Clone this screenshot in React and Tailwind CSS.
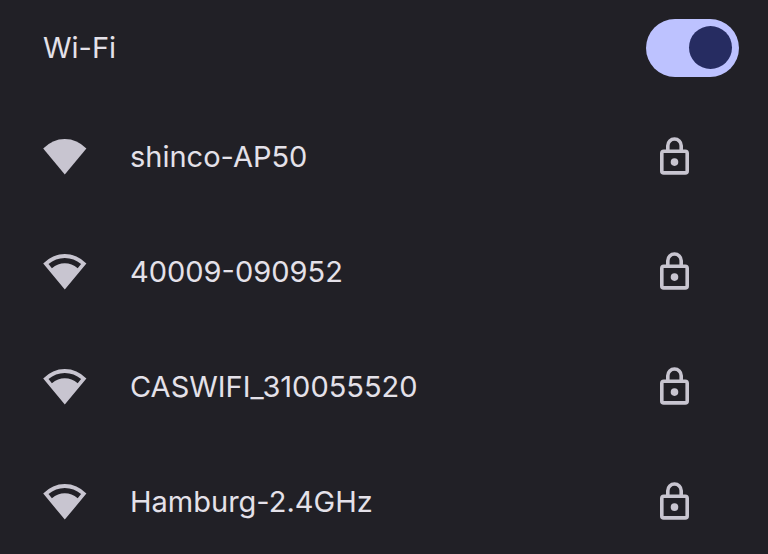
import React from "react";

const networks = [
  { name: "shinco-AP50", full: true },
  { name: "40009-090952", full: false },
  { name: "CASWIFI_310055520", full: false },
  { name: "Hamburg-2.4GHz", full: false },
];

function WifiIcon({ full }) {
  return (
    <svg className="h-9 w-11" viewBox="0 0 44 36" fill="currentColor" fillRule="evenodd" aria-hidden="true">
      {full ? (
        <path d="M21.8 35.6 0.2 9.6Q9.4 0 21.8 0T43.4 9.6Z" />
      ) : (
        <path d="M21.8 35.6 0.2 9.6Q9.4 0 21.8 0T43.4 9.6ZM5.5 10.1 8.9 14.3Q14.8 9.3 21.8 9.3T34.7 14.3L38.1 10.1Q31 4 21.8 4T5.5 10.1Z" />
      )}
    </svg>
  );
}

function LockIcon() {
  return (
    <svg className="h-10 w-8" viewBox="0 0 32 40" fill="none" stroke="currentColor" strokeWidth="3.6" aria-hidden="true">
      <rect x="1.8" y="14.3" width="25.4" height="21.6" rx="2" />
      <path d="M7.8 14V8.7a6.7 6.7 0 0 1 13.4 0V14" />
      <circle cx="14.5" cy="25.1" r="3.8" fill="currentColor" stroke="none" />
    </svg>
  );
}

export default function App() {
  return (
    <main className="h-screen overflow-x-hidden overflow-y-auto bg-[#212026] font-['Inter','Open_Sans',sans-serif] text-[29px] leading-10 text-[#e4e1e9] [scrollbar-width:none]">
      <header className="flex items-center justify-between pt-[19px] pr-[29px] pb-[22px] pl-[43px]">
        <label htmlFor="wifi">Wi-Fi</label>
        <span className="relative inline-flex h-[58px] w-[93px]">
          <input
            id="wifi"
            type="checkbox"
            role="switch"
            defaultChecked
            className="peer h-full w-full cursor-pointer appearance-none rounded-full bg-[#47464f] checked:bg-[#bdc2ff]"
          />
          <span className="pointer-events-none absolute top-[7px] left-[7px] size-[43px] rounded-full bg-[#262c61] peer-checked:left-[43px]" />
        </span>
      </header>
      <ul>
        {networks.map((n) => (
          <li key={n.name}>
            <button type="button" className="flex h-[115px] w-full cursor-pointer items-center pr-[76px] pl-[43px] text-left text-[#e4e1e9]">
              <span className="shrink-0 text-[#c8c5d0]"><WifiIcon full={n.full} /></span>
              <span className="ml-[43px] grow">{n.name}</span>
              <span className="shrink-0 text-[#c8c5d0]"><LockIcon /></span>
            </button>
          </li>
        ))}
      </ul>
    </main>
  );
}
